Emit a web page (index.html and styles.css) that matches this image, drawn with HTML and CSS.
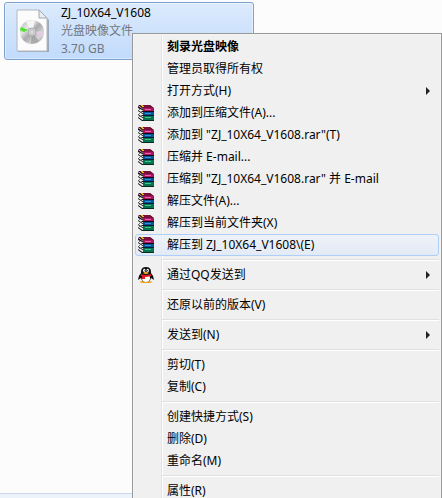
FILE: index.html
```
<!DOCTYPE html>
<html lang="zh-CN">

<head>
    <meta charset="UTF-8">
    <title>ZJ_10X64_V1608</title>
    <link rel="stylesheet" href="styles.css">
</head>

<body>
    <svg class="symbols" aria-hidden="true">
        <symbol id="rar" viewBox="0 0 16 16">
            <!-- páginas -->
            <path d="M0 1l6 4v11H4L0 13z" fill="#f4f4f4"/>
            <path d="M0 1l6 4v1L0 3zM0 5l6 4v1L0 6zM0 9l6 4v1L0 10zM0 12l6 4H4l-4-3z" fill="#111"/>
            <path d="M1 4h1v1H1zM3 6h1v1H3zM1 8h1v1H1zM3 10h1v1H3zM1 11h1v1H1z" fill="#777"/>
            <!-- libro superior -->
            <path d="M0 0h12l4 3v3H5V4z" fill="#4c0822"/>
            <path d="M1 0h11l3 3H5z" fill="#780f3a"/>
            <path d="M3 0h2v1h1v1H4V1H3z" fill="#d8c51c"/>
            <path d="M5 3h11v3H5z" fill="#a8145e"/>
            <path d="M7 4h6v1H7z" fill="#ec62b4"/>
            <path d="M4 6h12v1H4z" fill="#180617"/>
            <!-- libro central -->
            <path d="M5 7h11v3H5z" fill="#075398"/>
            <path d="M7 8h6v1H7z" fill="#2e96d8"/>
            <path d="M4 10h12v1H4z" fill="#071d34"/>
            <!-- libro inferior -->
            <path d="M5 11h11v4H5z" fill="#08744f"/>
            <path d="M7 12h6v1H7z" fill="#3fc391"/>
            <path d="M4 15h12v1H4z" fill="#062b21"/>
        </symbol>
        <symbol id="arrow" viewBox="0 0 4 8">
            <path d="M0 0l4 4-4 4z" fill="#222"/>
        </symbol>
    </svg>

    <main class="explorer">
        <div class="files">
            <a class="file" href="#">
                <svg class="disc-icon" viewBox="0 0 34 44" aria-hidden="true">
                    <defs>
                        <linearGradient id="metal" x2="1" y2="1">
                            <stop offset="0" stop-color="#aaa"/>
                            <stop offset=".3" stop-color="#e8e8e8"/>
                            <stop offset=".5" stop-color="#aaa"/>
                            <stop offset=".75" stop-color="#d8d8d8"/>
                            <stop offset="1" stop-color="#888"/>
                        </linearGradient>
                    </defs>
                    <path d="M2 2h22l9 9v32H2z" fill="#788594" opacity=".6"/>
                    <path d="M1 1h22l8 8v33H1z" fill="#fcfcfc" stroke="#b4b9be"/>
                    <path d="M23 1v8h8z" fill="#e9edf0" stroke="#a4a9ae"/>
                    <circle cx="16" cy="23" r="12" fill="url(#metal)"/>
                    <path d="M16 23L5 18q-1 2-1 5z" fill="#c9e3c4"/>
                    <path d="M12 21l-7-3-1 3 4 2z" fill="#4fe32e"/>
                    <path d="M16 23l-6-10q5-3 9-1z" fill="#f5f5f5"/>
                    <path d="M16 23l12-1q0 4-2 6z" fill="#e2cde2"/>
                    <path d="M16 23l7 9q-4 3-8 3z" fill="#8d8f91" opacity=".6"/>
                    <circle cx="16" cy="23" r="4" fill="#d0d2d5" stroke="#aaa"/>
                    <circle cx="16" cy="23" r="1.500" fill="#fff" stroke="#bbb"/>
                </svg>
                <span class="file-info">
                    <span class="file-name">ZJ_10X64_V1608</span>
                    <span>光盘映像文件</span>
                    <span>3.70 GB</span>
                </span>
            </a>
        </div>
        <div class="details"></div>

        <div class="menu" role="menu">
            <button class="item default" role="menuitem">刻录光盘映像</button>
            <button class="item" role="menuitem">管理员取得所有权</button>
            <button class="item" role="menuitem">打开方式(H)<svg class="arrow"><use href="#arrow"/></svg></button>
            <button class="item" role="menuitem"><svg class="icon"><use href="#rar"/></svg>添加到压缩文件(A)...</button>
            <button class="item" role="menuitem"><svg class="icon"><use href="#rar"/></svg>添加到 "ZJ_10X64_V1608.rar"(T)</button>
            <button class="item" role="menuitem"><svg class="icon"><use href="#rar"/></svg>压缩并 E-mail...</button>
            <button class="item" role="menuitem"><svg class="icon"><use href="#rar"/></svg>压缩到 "ZJ_10X64_V1608.rar" 并 E-mail</button>
            <button class="item" role="menuitem"><svg class="icon"><use href="#rar"/></svg>解压文件(A)...</button>
            <button class="item" role="menuitem"><svg class="icon"><use href="#rar"/></svg>解压到当前文件夹(X)</button>
            <button class="item active" role="menuitem"><svg class="icon"><use href="#rar"/></svg>解压到 ZJ_10X64_V1608\(E)</button>
            <hr class="separator">
            <button class="item" role="menuitem">
                <svg class="icon" viewBox="0 0 16 16">
                    <ellipse cx="8" cy="15" rx="6" ry="1.3" fill="#f6a51a"/>
                    <path d="M3 6Q0 9 0 13l3-2q1 4 5 4t5-4l3 2q0-4-3-7z" fill="#111"/>
                    <ellipse cx="8" cy="11" rx="4" ry="4" fill="#fff"/>
                    <path d="M3 6V5q0-5 5-5t5 5v2q-5 3-10 0z" fill="#111"/>
                    <ellipse cx="6.3" cy="3.5" rx="1.2" ry="1.7" fill="#fff"/>
                    <ellipse cx="9.7" cy="3.5" rx="1.2" ry="1.7" fill="#fff"/>
                    <path d="M6.5 3h.8v1.2h-.8zM9 3h.8v1.2H9z" fill="#111"/>
                    <path d="M5 6q3-2 6 0-3 2-6 0z" fill="#f8b71d"/>
                    <path d="M3 7q5 2 10 0v2q-3 1-6 1v2H4V9H3z" fill="#e41a22"/>
                </svg>通过QQ发送到<svg class="arrow"><use href="#arrow"/></svg>
            </button>
            <hr class="separator">
            <button class="item" role="menuitem">还原以前的版本(V)</button>
            <hr class="separator">
            <button class="item" role="menuitem">发送到(N)<svg class="arrow"><use href="#arrow"/></svg></button>
            <hr class="separator">
            <button class="item" role="menuitem">剪切(T)</button>
            <button class="item" role="menuitem">复制(C)</button>
            <hr class="separator">
            <button class="item" role="menuitem">创建快捷方式(S)</button>
            <button class="item" role="menuitem">删除(D)</button>
            <button class="item" role="menuitem">重命名(M)</button>
            <hr class="separator">
            <button class="item" role="menuitem">属性(R)</button>
        </div>
    </main>
</body>

</html>
```
FILE: styles.css
```
* {
    box-sizing: border-box;
}

body {
    margin: 0;
    font-family: "Noto Sans", "Noto Sans CJK SC", sans-serif;
    font-size: 12px;
    background: #fcfcfc;
}

.symbols {
    display: none;
}

.explorer {
    position: relative;
    display: flex;
    flex-direction: column;
    height: 100vh;
    overflow: hidden;
}

.files {
    flex: 1;
    padding: 2px 4px;
}

.file {
    display: flex;
    align-items: center;
    gap: 11px;
    max-width: 250px;
    height: 58px;
    padding-left: 11px;
    border: 1px solid #7da2ce;
    border-radius: 3px;
    box-shadow: inset 0 0 0 1px rgba(255, 255, 255, 0.4);
    background: linear-gradient(#dceafc, #c1dbfc);
    color: #707780;
    text-decoration: none;
}

.disc-icon {
    width: 34px;
    height: 44px;
}

.file-info {
    display: flex;
    flex-direction: column;
    line-height: 18px;
}

.file-name {
    color: #000;
}

.details {
    height: 5px;
    border-top: 1px solid #ccd7ea;
    background: #edf3fb;
}

/* menú contextual sobre la lista de archivos */
.menu {
    position: absolute;
    top: 33px;
    left: 132px;
    right: 0;
    padding: 2px;
    border: 1px solid #979797;
    box-shadow: inset 0 0 0 1px #f5f5f5;
    background: linear-gradient(90deg, #e2e3e3 1px, #fff 1px, #fff 2px, transparent 2px) 28px 2px no-repeat, #f0f0f0;
}

.item {
    display: flex;
    align-items: center;
    width: 100%;
    height: 22px;
    padding: 0 8px 0 31px;
    border: 1px solid transparent;
    border-radius: 3px;
    background: none;
    color: #000;
    font: inherit;
    line-height: 20px;
    text-align: left;
    white-space: nowrap;
}

.item.default {
    font-weight: bold;
}

.item.active,
.item:hover {
    border-color: #aecff7;
    background: linear-gradient(rgba(238, 243, 250, 0.8), rgba(223, 233, 247, 0.8));
}

.icon {
    flex: none;
    width: 16px;
    height: 16px;
    margin-left: -29px;
    margin-right: 13px;
}

.arrow {
    width: 4px;
    height: 8px;
    margin-left: auto;
}

.separator {
    height: 2px;
    margin: 3px 0 3px 27px;
    border: 0;
    border-top: 1px solid #e0e0e0;
    background: #fff;
}
```
